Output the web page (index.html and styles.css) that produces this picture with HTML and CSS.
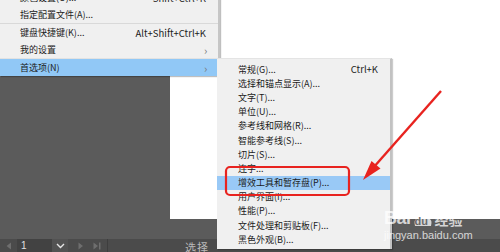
FILE: index.html
```html
<!DOCTYPE html>
<html lang="zh-CN">
<head>
<meta charset="utf-8">
<title>首选项</title>
<link rel="stylesheet" href="styles.css">
</head>
<body>
<div class="screen">
  <div class="workspace">
    <div class="artboard"></div>
  </div>
  <div class="statusbar">
    <span class="sb-prev"><svg width="6" height="8" viewBox="0 0 6 8"><path d="M5 0.5 L0.5 4 L5 7.5 Z" fill="#6e6e6e"/></svg></span>
    <span class="sb-input">1</span>
    <span class="sb-drop"><svg width="9" height="6" viewBox="0 0 9 6"><path d="M1 1 L4.5 4.5 L8 1" fill="none" stroke="#e6e6e6" stroke-width="1.4"/></svg></span>
    <span class="sb-next"><svg width="6" height="8" viewBox="0 0 6 8"><path d="M0.5 0.5 L5 4 L0.5 7.5 Z" fill="#6e6e6e"/></svg></span>
    <span class="sb-last"><svg width="8" height="8" viewBox="0 0 8 8"><path d="M0.5 0.5 L5 4 L0.5 7.5 Z" fill="#6e6e6e"/><rect x="6" y="0.5" width="1.5" height="7" fill="#6e6e6e"/></svg></span>
    <span class="sb-sep"></span>
    <span class="sb-label">选择</span>
  </div>

  <div class="menu menu-main">
    <div class="item"><span class="label">颜色设置(O)...</span><span class="key">Shift+Ctrl+K</span></div>
    <div class="item"><span class="label">指定配置文件(A)...</span></div>
    <div class="sep"></div>
    <div class="item"><span class="label">键盘快捷键(K)...</span><span class="key">Alt+Shift+Ctrl+K</span></div>
    <div class="item"><span class="label">我的设置</span><span class="arrow">›</span></div>
    <div class="sep light"></div>
    <div class="item active"><span class="label">首选项(N)</span><span class="arrow">›</span></div>
  </div>

  <div class="menu menu-sub">
    <div class="subitem"><span class="label">常规(G)...</span><span class="key">Ctrl+K</span></div>
    <div class="subitem"><span class="label">选择和锚点显示(A)...</span></div>
    <div class="subitem"><span class="label">文字(T)...</span></div>
    <div class="subitem"><span class="label">单位(U)...</span></div>
    <div class="subitem"><span class="label">参考线和网格(R)...</span></div>
    <div class="subitem"><span class="label">智能参考线(S)...</span></div>
    <div class="subitem"><span class="label">切片(S)...</span></div>
    <div class="subitem"><span class="label">连字...</span></div>
    <div class="subitem active"><span class="label">增效工具和暂存盘(P)...</span></div>
    <div class="subitem"><span class="label">用户界面(I)...</span></div>
    <div class="subitem"><span class="label">性能(P)...</span></div>
    <div class="subitem"><span class="label">文件处理和剪贴板(F)...</span></div>
    <div class="subitem"><span class="label">黑色外观(B)...</span></div>
  </div>

  <div class="watermark">
    <div class="wm-logo">
      <span class="wm-bai">Bai</span>
      <span class="wm-paw">
        <svg width="22" height="27" viewBox="0 0 22 27">
          <g fill="none" stroke="rgba(255,255,255,0.75)" stroke-width="1.3">
            <ellipse cx="3.5" cy="11" rx="2.6" ry="3.2"/>
            <ellipse cx="8" cy="4.2" rx="2.6" ry="3.3"/>
            <ellipse cx="14.5" cy="4.2" rx="2.6" ry="3.3"/>
            <ellipse cx="19" cy="11" rx="2.6" ry="3.2"/>
          </g>
          <path d="M3 26 Q1 20 7 16 Q11 12 15 16 Q21 20 19 26 Z" fill="rgba(255,255,255,0.75)"/>
        </svg>
        <span class="wm-du">du</span>
      </span>
      <span class="wm-jy">经验</span>
    </div>
    <div class="wm-url">jingyan.baidu.com</div>
  </div>

  <svg class="annot" width="500" height="252" viewBox="0 0 500 252">
    <rect x="226" y="167" width="123" height="28" rx="4" ry="4" fill="none" stroke="#e8231f" stroke-width="2.2"/>
    <line x1="441" y1="91" x2="373" y2="168" stroke="#e8231f" stroke-width="2.4"/>
    <path d="M363 180 L380.5 168.5 L371.5 161 Z" fill="#e8231f"/>
  </svg>
</div>
</body>
</html>
```

FILE: styles.css
```css
html, body {
  margin: 0;
  padding: 0;
}
body {
  width: 500px;
  height: 252px;
  overflow: hidden;
  background: #5a5a5a;
  font-family: "Noto Sans CJK SC", "Noto Sans", sans-serif;
}
.screen {
  position: relative;
  width: 500px;
  height: 252px;
  overflow: hidden;
}
.workspace {
  height: 239px;
  background: #5b5b5b;
  padding-left: 170px;
  box-sizing: border-box;
}
.artboard {
  height: 219px;
  background: #ffffff;
}
.statusbar {
  height: 13px;
  background: #4b4b4b;
  display: flex;
  align-items: flex-start;
  color: #6e6e6e;
}
.sb-prev {
  width: 17px;
  height: 13px;
  display: flex;
  align-items: center;
  justify-content: center;
}
.sb-input {
  width: 35px;
  height: 13px;
  box-sizing: border-box;
  background: #424242;
  color: #e0e0e0;
  font-family: "Liberation Sans", sans-serif;
  font-size: 10px;
  line-height: 14px;
  padding-left: 4px;
}
.sb-drop {
  width: 16px;
  height: 13px;
  background: #525252;
  display: flex;
  align-items: center;
  justify-content: center;
}
.sb-next {
  width: 6px;
  height: 13px;
  margin-left: 10px;
  display: flex;
  align-items: center;
}
.sb-last {
  width: 8px;
  height: 13px;
  margin-left: 9px;
  display: flex;
  align-items: center;
}
.sb-sep {
  width: 1px;
  height: 13px;
  margin-left: 6px;
  background: #3e3e3e;
}
.sb-label {
  margin-left: 77px;
  color: #b9b9b9;
  font-size: 11px;
  line-height: 11px;
  padding-top: 3px;
  letter-spacing: 1px;
}

/* menus */
.menu {
  position: absolute;
  background: #f0f0f0;
  color: #1b1b1b;
  font-size: 9px;
  box-sizing: border-box;
}
.menu-main {
  left: 0;
  top: -11px;
  width: 220px;
  border-right: 2px solid #c6c6c6;
  box-shadow: 1px 1px 1px rgba(0,0,0,0.25);
}
.item {
  height: 17px;
  display: flex;
  align-items: center;
  padding-left: 20px;
  padding-right: 12px;
}
.item .label {
  flex: 1;
}
.item .key {
  font-size: 9.5px;
}
.item .arrow {
  color: #777;
  font-size: 11px;
  margin-right: -6px;
  width: 8px;
}
.item.active {
  background: #91c8f6;
}
.sep {
  height: 1px;
  background: #d9d9d9;
}
.sep.light {
  background: #e2e2e2;
}

.menu-sub {
  left: 217px;
  top: 58px;
  width: 175px;
  padding-top: 3px;
  padding-bottom: 3px;
  border-right: 2px solid #c2c2c2;
  border-top: 1px solid #e4e4e4;
  box-shadow: 1px 1px 1px rgba(0,0,0,0.2);
}
.subitem {
  height: 14.2px;
  display: flex;
  align-items: center;
  padding-left: 21px;
  padding-right: 12px;
}
.subitem .label {
  flex: 1;
}
.subitem .key {
  font-size: 9.5px;
}
.subitem.active {
  background: #99c9f6;
}

/* watermark */
.watermark {
  position: absolute;
  left: 384px;
  top: 199px;
  color: rgba(255,255,255,0.75);
  font-family: "Liberation Sans", "Noto Sans CJK SC", sans-serif;
}
.wm-logo {
  display: flex;
  align-items: flex-end;
  height: 28px;
}
.wm-bai {
  font-size: 18px;
  font-weight: bold;
  line-height: 18px;
  letter-spacing: -0.5px;
}
.wm-paw {
  position: relative;
  width: 22px;
  height: 27px;
  margin-left: 1px;
}
.wm-paw svg {
  display: block;
}
.wm-du {
  position: absolute;
  left: 3px;
  bottom: 0;
  font-size: 11px;
  font-weight: bold;
  line-height: 12px;
  color: rgba(90,90,90,0.9);
}
.wm-jy {
  font-family: "Noto Sans CJK SC", sans-serif;
  font-size: 14px;
  font-weight: bold;
  line-height: 16px;
  margin-left: 1px;
}
.wm-url {
  font-size: 11px;
  line-height: 13px;
  margin-top: 2px;
}

.annot {
  position: absolute;
  left: 0;
  top: 0;
  pointer-events: none;
}
```
